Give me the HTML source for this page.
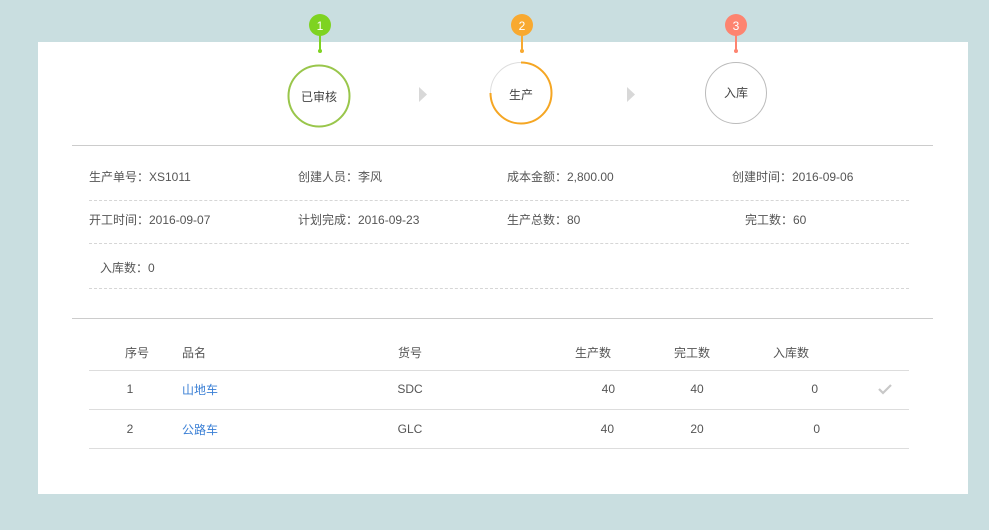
<!DOCTYPE html>
<html><head><meta charset="utf-8"><style>
*{margin:0;padding:0;box-sizing:border-box}
body{width:989px;height:530px;background:#c9dee0;position:relative;overflow:hidden;font-family:"Liberation Sans","Noto Sans CJK SC",sans-serif;font-size:12px;color:#555}
.card{position:absolute;left:38px;top:42px;width:930px;height:452px;background:#fff}
.a{position:absolute;white-space:nowrap;line-height:14px}
.hl{position:absolute;height:1px;background:#ccc}
.dl{position:absolute;height:0;border-top:1px dashed #d6d6d6;left:89px;width:820px}
.tl{position:absolute;height:1px;background:#ddd;left:89px;width:820px}
.c{transform:translateX(-50%)}
.r{transform:translateX(-100%)}
.blue{color:#3a7fd5}
</style></head><body>
<div class="card"></div>
<svg style="position:absolute;left:0;top:0" width="989" height="530">
 <g>
  <line x1="320" y1="30" x2="320" y2="51" stroke="#7ed321" stroke-width="2"/>
  <circle cx="320" cy="51" r="2" fill="#7ed321"/>
  <circle cx="320" cy="25" r="11" fill="#7ed321"/>
  <text x="320" y="30" font-size="12" fill="#fff" text-anchor="middle" font-family="Liberation Sans">1</text>
  <circle cx="319" cy="96" r="30.5" fill="none" stroke="#99c64b" stroke-width="2"/>
 </g>
 <g>
  <line x1="522" y1="30" x2="522" y2="51" stroke="#f8a930" stroke-width="2"/>
  <circle cx="522" cy="51" r="2" fill="#f8a930"/>
  <circle cx="522" cy="25" r="11" fill="#f8a930"/>
  <text x="522" y="30" font-size="12" fill="#fff" text-anchor="middle" font-family="Liberation Sans">2</text>
  <circle cx="521" cy="93" r="30.5" fill="none" stroke="#ddd" stroke-width="1"/>
  <path d="M521 62.5 A30.5 30.5 0 1 1 490.5 93" fill="none" stroke="#f5a623" stroke-width="2"/>
 </g>
 <g>
  <line x1="736" y1="30" x2="736" y2="51" stroke="#fd8470" stroke-width="2"/>
  <circle cx="736" cy="51" r="2" fill="#fd8470"/>
  <circle cx="736" cy="25" r="11" fill="#fd8470"/>
  <text x="736" y="30" font-size="12" fill="#fff" text-anchor="middle" font-family="Liberation Sans">3</text>
  <circle cx="736" cy="93" r="30.5" fill="none" stroke="#bbb" stroke-width="1"/>
 </g>
 <path d="M419 87 L427 94.5 L419 102Z" fill="#d8d8d8"/>
 <path d="M627 87 L635 94.5 L627 102Z" fill="#d8d8d8"/>
 <path d="M879 389 L883 393 L891 385" fill="none" stroke="#c8c8c8" stroke-width="2.2"/>
</svg>
<div class="a c" style="left:319px;top:90px;color:#444">已审核</div>
<div class="a c" style="left:521px;top:88px;color:#444">生产</div>
<div class="a c" style="left:736px;top:86px;color:#444">入库</div>
<div class="hl" style="left:72px;top:145px;width:861px"></div>
<div class="a" style="left:89px;top:170px">生产单号：XS1011</div>
<div class="a" style="left:298px;top:170px">创建人员：李风</div>
<div class="a" style="left:507px;top:170px">成本金额：2,800.00</div>
<div class="a" style="left:732px;top:170px">创建时间：2016-09-06</div>
<div class="dl" style="top:200px"></div>
<div class="a" style="left:89px;top:213px">开工时间：2016-09-07</div>
<div class="a" style="left:298px;top:213px">计划完成：2016-09-23</div>
<div class="a" style="left:507px;top:213px">生产总数：80</div>
<div class="a" style="left:745px;top:213px">完工数：60</div>
<div class="dl" style="top:243px"></div>
<div class="a" style="left:100px;top:261px">入库数：0</div>
<div class="dl" style="top:288px"></div>
<div class="hl" style="left:72px;top:318px;width:861px"></div>
<div class="a c" style="left:137px;top:346px">序号</div>
<div class="a" style="left:182px;top:346px">品名</div>
<div class="a c" style="left:410px;top:346px">货号</div>
<div class="a c" style="left:593px;top:346px">生产数</div>
<div class="a c" style="left:692px;top:346px">完工数</div>
<div class="a c" style="left:791px;top:346px">入库数</div>
<div class="tl" style="top:370px"></div>
<div class="a c" style="left:130px;top:382px">1</div>
<div class="a blue" style="left:182px;top:383px">山地车</div>
<div class="a c" style="left:410px;top:382px">SDC</div>
<div class="a r" style="left:615px;top:382px">40</div>
<div class="a c" style="left:697px;top:382px">40</div>
<div class="a r" style="left:818px;top:382px">0</div>
<div class="tl" style="top:409px"></div>
<div class="a c" style="left:130px;top:422px">2</div>
<div class="a blue" style="left:182px;top:423px">公路车</div>
<div class="a c" style="left:410px;top:422px">GLC</div>
<div class="a r" style="left:614px;top:422px">40</div>
<div class="a c" style="left:697px;top:422px">20</div>
<div class="a r" style="left:820px;top:422px">0</div>
<div class="tl" style="top:448px"></div>
</body></html>
